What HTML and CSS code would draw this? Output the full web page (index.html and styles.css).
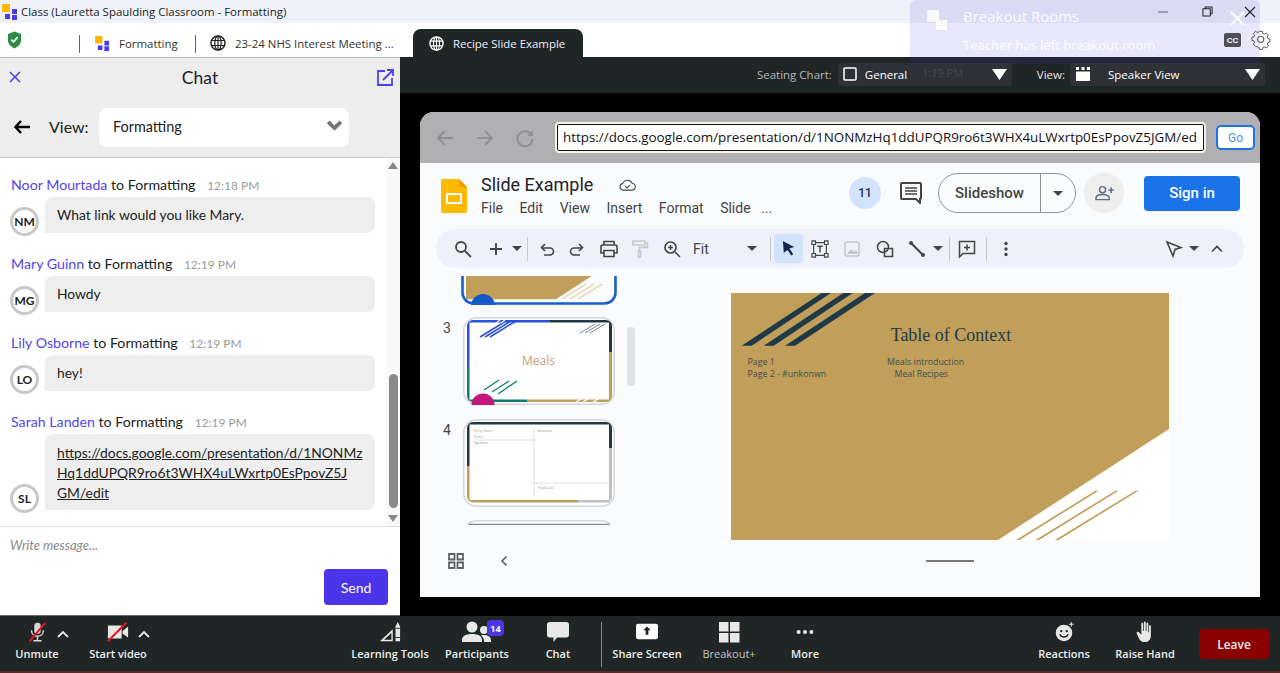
FILE: index.html
```html
<!DOCTYPE html>
<html lang="en">
<head>
<meta charset="utf-8">
<title>Class - Formatting</title>
<link rel="stylesheet" href="styles.css">
</head>
<body>
<svg class="defs" width="0" height="0" aria-hidden="true">
  <symbol id="globe" viewBox="0 0 16 16"><circle cx="8" cy="8" r="7" fill="none" stroke="currentColor" stroke-width="1.5"/><ellipse cx="8" cy="8" rx="3.2" ry="7" fill="none" stroke="currentColor" stroke-width="1.2"/><path d="M1 5.5h14M1 10.5h14M8 1v14" fill="none" stroke="currentColor" stroke-width="1.2"/></symbol>
  <symbol id="caret" viewBox="0 0 10 5"><path d="M0 0h10L5 5z" fill="currentColor"/></symbol>
  <symbol id="logo" viewBox="0 0 16 16"><path d="M0 0h8v8H0z" fill="#ffb800"/><path d="M10 5h5v5h-5zM3 10h5v5H3zM10 11h5v5h-5z" fill="#4a3ae8"/></symbol>
</svg>
<div class="app">
  <div class="titlebar"><svg class="title-logo"><use href="#logo"/></svg><span>Class (Lauretta Spaulding Classroom - Formatting)</span></div>
  <div class="tabbar">
    <svg class="shield" viewBox="0 0 16 18"><path d="M8 0l7 2.500V9c0 4-3 7-7 9-4-2-7-5-7-9V2.500z" fill="#2e8b45"/><path d="M4.500 8.500l2.500 2.500 4.500-5" fill="none" stroke="#fff" stroke-width="1.800"/></svg>
    <i class="tab-sep tab-sep-a"></i>
    <div class="tab tab-one"><svg class="tab-icon"><use href="#logo"/></svg><span>Formatting</span></div>
    <i class="tab-sep"></i>
    <div class="tab tab-two"><svg class="tab-globe"><use href="#globe"/></svg><span>23-24 NHS Interest Meeting ...</span></div>
    <div class="tab tab-active"><svg class="tab-globe"><use href="#globe"/></svg><span>Recipe Slide Example</span></div>
  </div>
  <div class="main">
    <aside class="chat">
      <header class="chat-head">
        <svg class="chat-close" viewBox="0 0 12 12"><path d="M1 1l10 10M11 1L1 11" stroke="currentColor" stroke-width="1.600" fill="none"/></svg>
        <h1>Chat</h1>
        <svg class="chat-pop" viewBox="0 0 17 17"><path d="M8 2H1v14h14V9" fill="none" stroke="currentColor" stroke-width="1.800"/><path d="M6 11L15.500 1.500M10 1h6v6" fill="none" stroke="currentColor" stroke-width="1.800"/></svg>
      </header>
      <div class="chat-view">
        <svg class="back" viewBox="0 0 16 14"><path d="M7 1L1.500 7 7 13M2 7h14" fill="none" stroke="#000" stroke-width="2.400"/></svg>
        <span class="view-label">View:</span>
        <div class="view-select"><span>Formatting</span><svg viewBox="0 0 16 10"><path d="M2 1.500l6 6 6-6" fill="none" stroke="#777" stroke-width="3.600"/></svg></div>
      </div>
      <div class="chat-scroll">
        <div class="messages">
          <article class="msg">
            <div class="msg-head"><b>Noor Mourtada</b> to Formatting <time>12:18 PM</time></div>
            <div class="msg-body"><span class="avatar">NM</span><p class="bubble">What link would you like Mary.</p></div>
          </article>
          <article class="msg">
            <div class="msg-head"><b>Mary Guinn</b> to Formatting <time>12:19 PM</time></div>
            <div class="msg-body"><span class="avatar">MG</span><p class="bubble">Howdy</p></div>
          </article>
          <article class="msg">
            <div class="msg-head"><b>Lily Osborne</b> to Formatting <time>12:19 PM</time></div>
            <div class="msg-body"><span class="avatar">LO</span><p class="bubble">hey!</p></div>
          </article>
          <article class="msg">
            <div class="msg-head"><b>Sarah Landen</b> to Formatting <time>12:19 PM</time></div>
            <div class="msg-body"><span class="avatar">SL</span><p class="bubble bubble-link"><u>https://docs.google.com/presentation/d/1NONMz<br>Hq1ddUPQR9ro6t3WHX4uLWxrtp0EsPpovZ5J<br>GM/edit</u></p></div>
          </article>
        </div>
        <div class="scrollbar">
          <svg class="sb-arrow" viewBox="0 0 10 7"><path d="M5 0l5 7H0z" fill="#888"/></svg>
          <div class="sb-track"><div class="sb-thumb"></div></div>
          <svg class="sb-arrow" viewBox="0 0 10 7"><path d="M0 0h10L5 7z" fill="#888"/></svg>
        </div>
      </div>
      <div class="composer">
        <div class="placeholder">Write message...</div>
        <button class="send">Send</button>
      </div>
    </aside>
    <section class="stage">
      <div class="stage-bar">
        <span class="bar-label">Seating Chart:</span>
        <div class="bar-select bar-seat">
          <svg class="sel-icon" viewBox="0 0 14 14"><rect x="1" y="1" width="12" height="12" rx="1" fill="none" stroke="#fff" stroke-width="1.500"/></svg>
          <span>General</span>
          <svg class="sel-tri" viewBox="0 0 15 11"><path d="M0 0h15L7.500 11z" fill="#fff"/></svg>
        </div>
        <span class="bar-label bar-label-view">View:</span>
        <div class="bar-select bar-speaker">
          <svg class="sel-icon sel-icon-view" viewBox="0 0 14 14"><path d="M0 0h3v3H0zM5.500 0h3v3h-3zM11 0h3v3h-3zM0 4.500h14V14H0z" fill="#fff"/></svg>
          <span>Speaker View</span>
          <svg class="sel-tri" viewBox="0 0 15 11"><path d="M0 0h15L7.500 11z" fill="#fff"/></svg>
        </div>
      </div>
      <div class="viewer">
        <div class="browser">
          <div class="nav">
            <svg class="nav-ic" viewBox="0 0 20 20"><path d="M18 10H3M10 3l-7 7 7 7" fill="none" stroke="#909094" stroke-width="2"/></svg>
            <svg class="nav-ic" viewBox="0 0 20 20"><path d="M2 10h15M10 3l7 7-7 7" fill="none" stroke="#909094" stroke-width="2"/></svg>
            <svg class="nav-ic" viewBox="0 0 20 20"><path d="M16.500 7A7.500 7.500 0 1 0 17.500 11" fill="none" stroke="#909094" stroke-width="2"/><path d="M18 2v6h-6z" fill="#909094"/></svg>
            <div class="url">https://docs.google.com/presentation/d/1NONMzHq1ddUPQR9ro6t3WHX4uLWxrtp0EsPpovZ5JGM/ed</div>
            <button class="go">Go</button>
          </div>
          <div class="doc">
            <div class="doc-head">
              <svg class="doc-logo" viewBox="0 0 26 34"><path d="M2 0h16l8 8v24a2 2 0 0 1-2 2H2a2 2 0 0 1-2-2V2a2 2 0 0 1 2-2z" fill="#ffba00"/><path d="M18 0l8 8h-8z" fill="#f29900"/><rect x="6" y="15" width="14" height="9" fill="none" stroke="#fff" stroke-width="2"/></svg>
              <div class="doc-titles">
                <div class="doc-title"><span>Slide Example</span><svg viewBox="0 0 20 14"><path d="M5 13a4 4 0 0 1-.6-7.900A6 6 0 0 1 15.500 5 4 4 0 0 1 15 13z" fill="none" stroke="#444" stroke-width="1.300"/><path d="M7.500 8.500l2 2 3.500-3.500" fill="none" stroke="#444" stroke-width="1.200"/></svg></div>
                <nav class="doc-menu"><span>File</span><span>Edit</span><span>View</span><span>Insert</span><span>Format</span><span>Slide</span><span class="menu-more">...</span></nav>
              </div>
              <div class="doc-actions">
                <span class="count">11</span>
                <svg class="comments" viewBox="0 0 22 22"><path d="M2 1h18a1 1 0 0 1 1 1v14a1 1 0 0 1-1 1v4l-4-4H2a1 1 0 0 1-1-1V2a1 1 0 0 1 1-1z" fill="none" stroke="#444" stroke-width="2"/><path d="M5 6h12M5 9h12M5 12h12" stroke="#444" stroke-width="1.600"/></svg>
                <div class="slideshow"><span class="ss-label">Slideshow</span><span class="ss-caret"><svg><use href="#caret"/></svg></span></div>
                <span class="share"><svg viewBox="0 0 20 16"><circle cx="8" cy="4.500" r="3.200" fill="none" stroke="#5f6b7a" stroke-width="1.500"/><path d="M1 15v-1.500c0-2.500 3-4 7-4s7 1.500 7 4V15z" fill="none" stroke="#5f6b7a" stroke-width="1.500"/><path d="M14 5h6M17 2v6" stroke="#5f6b7a" stroke-width="1.500"/></svg></span>
                <button class="signin">Sign in</button>
              </div>
            </div>
            <div class="toolbar">
              <svg class="ti" viewBox="0 0 18 18"><circle cx="7" cy="7" r="5" fill="none" stroke="#444" stroke-width="1.800"/><path d="M11 11l6 6" stroke="#444" stroke-width="1.800"/></svg>
              <svg class="ti" viewBox="0 0 18 18"><path d="M9 3v12M3 9h12" stroke="#444" stroke-width="1.900"/></svg>
              <svg class="tc"><use href="#caret"/></svg>
              <i class="ts"></i>
              <svg class="ti" viewBox="0 0 18 18"><path d="M4 8h8a3.500 3.500 0 0 1 0 7H6M7 4L3.500 7.500 7 11" fill="none" stroke="#444" stroke-width="1.600"/></svg>
              <svg class="ti" viewBox="0 0 18 18"><path d="M14 8H6a3.500 3.500 0 0 0 0 7h6M11 4l3.500 3.500L11 11" fill="none" stroke="#444" stroke-width="1.600"/></svg>
              <svg class="ti" viewBox="0 0 18 18"><path d="M4 5V1.500h10V5M4 13H1V6.500A1.500 1.500 0 0 1 2.500 5h13A1.500 1.500 0 0 1 17 6.500V13h-3M4 10.500h10v6H4z" fill="none" stroke="#444" stroke-width="1.600"/></svg>
              <svg class="ti" viewBox="0 0 18 18"><path d="M2 1h12v4H2zM14 3h2.500v4.500H8.500V11M7.500 11h2v6h-2z" fill="none" stroke="#c4c7c9" stroke-width="1.500"/></svg>
              <svg class="ti" viewBox="0 0 18 18"><circle cx="7.500" cy="7.500" r="5.500" fill="none" stroke="#444" stroke-width="1.700"/><path d="M12 12l5 5M7.500 5v5M5 7.500h5" stroke="#444" stroke-width="1.500"/></svg>
              <span class="fit">Fit</span>
              <svg class="tc"><use href="#caret"/></svg>
              <i class="ts"></i>
              <span class="cursor"><svg viewBox="0 0 16 18"><path d="M2 1l12 6.500-5 1.500 4 6-2 1.500-4-6-4 3z" fill="#12264a"/></svg></span>
              <svg class="ti" viewBox="0 0 20 20"><path d="M3 3h14v14H3z" fill="none" stroke="#444" stroke-width="1.300"/><path d="M1 1h4v4H1zM15 1h4v4h-4zM1 15h4v4H1zM15 15h4v4h-4z" fill="#edf2fa" stroke="#444" stroke-width="1.300"/><path d="M7 7h6M10 7v7" stroke="#444" stroke-width="1.600"/></svg>
              <svg class="ti" viewBox="0 0 18 18"><rect x="2" y="2" width="14" height="14" rx="2" fill="none" stroke="#c4c7c9" stroke-width="1.500"/><path d="M4 14l4-5 3 3 2-2 2 4z" fill="#c4c7c9"/></svg>
              <svg class="ti" viewBox="0 0 18 18"><circle cx="7" cy="7" r="5.500" fill="none" stroke="#444" stroke-width="1.500"/><path d="M8.500 8.500h8v8h-8z" fill="none" stroke="#444" stroke-width="1.500"/></svg>
              <svg class="ti" viewBox="0 0 18 18"><path d="M3 3l12 12" stroke="#444" stroke-width="2"/><circle cx="3" cy="3" r="2" fill="#444"/><circle cx="15" cy="15" r="2" fill="#444"/></svg>
              <svg class="tc"><use href="#caret"/></svg>
              <i class="ts"></i>
              <svg class="ti" viewBox="0 0 18 18"><path d="M1.500 1.500h15v12H5L1.500 17z" fill="none" stroke="#444" stroke-width="1.500"/><path d="M9 4.500v6M6 7.500h6" stroke="#444" stroke-width="1.500"/></svg>
              <i class="ts"></i>
              <svg class="ti" viewBox="0 0 18 18"><circle cx="9" cy="3.500" r="1.700" fill="#444"/><circle cx="9" cy="9" r="1.700" fill="#444"/><circle cx="9" cy="14.500" r="1.700" fill="#444"/></svg>
              <svg class="ti" viewBox="0 0 18 18"><path d="M2 2l14 5.500-6 2-2 6.500z" fill="none" stroke="#444" stroke-width="1.600"/></svg>
              <svg class="tc"><use href="#caret"/></svg>
              <svg class="ti" viewBox="0 0 18 18"><path d="M4 11.500l5-5 5 5" fill="none" stroke="#444" stroke-width="1.700"/></svg>
            </div>
            <div class="workspace">
              <div class="film">
                <div class="film-list">
                  <div class="film-row film-row-first">
                    <svg class="thumb-cut" viewBox="0 0 156 29"><path d="M5 0h125.700L95 23.300H5z" fill="#c19f5b"/><path d="M125 8L101 23M133 8l-24 15M141 8l-24 15" stroke="#e4cf9f" stroke-width="1.200"/><circle cx="22" cy="30" r="12" fill="#1259c3"/><path d="M1.500 0v16a11 11 0 0 0 11 11.500h131a11 11 0 0 0 11-11.500V0" fill="none" stroke="#1a5fd0" stroke-width="2.600"/></svg>
                  </div>
                  <div class="film-row">
                    <span class="film-num">3</span>
                    <svg class="thumb" viewBox="0 0 152 88">
                      <rect x=".75" y=".75" width="150.500" height="86.500" rx="13" fill="#fff" stroke="#d4d6d8" stroke-width="1.500"/>
                      <path d="M4 9a6 6 0 0 1 6-6h77v2.500H6.500V50H4z" fill="#2b50dc"/>
                      <path d="M87 3h56a6 6 0 0 1 6 6v26h-3V5.500H87z" fill="#1f3a42"/>
                      <path d="M146 35h3v44a6 6 0 0 1-6 6H64v-2.500h82z" fill="#c19f5b"/>
                      <path d="M4 50h2.500v32.500H64V85H10a6 6 0 0 1-6-6z" fill="#0f7b6c"/>
                      <path d="M17 20L43 4M22 20L48 4M27 20L53 4" stroke="#2b50dc" stroke-width="1.500" fill="none"/>
                      <path d="M33 6l4-3M38 6l4-3" stroke="#fff" stroke-width="1.200"/>
                      <path d="M117 16l15-9M122 16l15-9M127 16l15-9" stroke="#74838a" stroke-width="1"/>
                      <path d="M21 73l15-10M29 75l17-11M35 77l19-13" stroke="#0f7b6c" stroke-width="1.300"/>
                      <path d="M113 85l5-3M120 85l5-3M130 85l5-3" stroke="#fff" stroke-width="1.300"/>
                      <circle cx="20" cy="88" r="11.500" fill="#c2187d"/>
                      <text x="75.500" y="48" class="thumb-meals" text-anchor="middle">Meals</text>
                    </svg>
                  </div>
                  <div class="film-row film-row-gap">
                    <span class="film-num">4</span>
                    <svg class="thumb" viewBox="0 0 152 88">
                      <rect x=".75" y=".75" width="150.500" height="86.500" rx="13" fill="#fff" stroke="#d4d6d8" stroke-width="1.500"/>
                      <path d="M4 9a6 6 0 0 1 6-6h133a6 6 0 0 1 6 6v20h-3V5.500H6.500V47H4z" fill="#1f3a42"/>
                      <path d="M4 47h2.500v34H115v2.500H10a6 6 0 0 1-6-6z" fill="#c19f5b"/>
                      <path d="M146 29h3v50l-3 4.500H115V81h31z" fill="#bfc1c2"/>
                      <path d="M71 9v68M10 21h64M67 64h80" stroke="#d8d9da" stroke-width=".8"/>
                      <text x="11" y="13" class="thumb-t thumb-t-o">Recipe Name:</text>
                      <text x="11" y="18.500" class="thumb-t thumb-t-o">Name:</text>
                      <text x="11" y="25" class="thumb-t">Ingredients:</text>
                      <text x="74" y="12.500" class="thumb-t">Instructions:</text>
                      <text x="75" y="70" class="thumb-t">Prep &amp; Cook:</text>
                    </svg>
                  </div>
                  <div class="film-row">
                    <svg class="thumb thumb-next" viewBox="0 0 152 88"><rect x=".75" y=".75" width="150.500" height="86.500" rx="13" fill="#fff" stroke="#d4d6d8" stroke-width="1.500"/><path d="M6 4.500h140" stroke="#7d8c92" stroke-width="1.500"/></svg>
                  </div>
                  <div class="film-scroll"></div>
                </div>
                <div class="film-foot">
                  <svg class="film-grid" viewBox="0 0 16 16"><path d="M1 1h5.500v5.500H1zM9.500 1H15v5.500H9.500zM1 9.500h5.500V15H1zM9.500 9.500H15V15H9.500z" fill="none" stroke="#5f6368" stroke-width="1.800"/></svg>
                  <svg class="film-back" viewBox="0 0 8 12"><path d="M6.500 1.500L2 6l4.500 4.500" fill="none" stroke="#5f6368" stroke-width="1.700"/></svg>
                </div>
              </div>
              <div class="canvas">
                <svg class="slide" viewBox="0 0 438 247">
                  <rect width="438" height="247" fill="#c19f5b"/>
                  <path d="M90.700 0H100L20.700 52.700H10.700zM112.300 0h9.400L42.700 52.700h-10zM134 0h10L64 52.700H54z" fill="#1f3a47"/>
                  <path d="M438 136L267 247h171z" fill="#fff"/>
                  <path d="M364.500 197.700h3L288.500 247h-3.500zM384.500 197.700h3L308 247h-3.500zM404.500 197.700h3L327.500 247H324z" fill="#c19f5b"/>
                  <text x="220" y="48" text-anchor="middle" class="s-title">Table of Context</text>
                  <text x="16.500" y="72" class="s-text">Page 1</text>
                  <text x="16.500" y="84" class="s-text">Page 2 - #unkonwn</text>
                  <text x="156" y="72" class="s-text">Meals introduction</text>
                  <text x="163.500" y="84" class="s-text">Meal Recipes</text>
                </svg>
                <div class="handle"></div>
              </div>
            </div>
          </div>
        </div>
      </div>
      <div class="toast">
        <svg class="toast-icon" viewBox="0 0 20 20"><path d="M0 0h12v12H0z" fill="#fff" opacity=".8"/><path d="M9 10h5v5H9zM15 10h5v5h-5zM9 15.500h11V20H9z" fill="#fff" opacity=".95"/></svg>
        <div class="toast-body">
          <div class="toast-title">Breakout Rooms</div>
          <div class="toast-msg">Teacher has left breakout room</div>
          <div class="toast-time">1:19 PM</div>
        </div>
        <svg class="toast-x" viewBox="0 0 16 16"><path d="M1 1l14 14M15 1L1 15" stroke="#fff" stroke-width="2.200"/></svg>
      </div>
      <div class="winctl">
        <div class="win-row">
          <svg class="win-min" viewBox="0 0 12 2"><path d="M1 1h10" stroke="#777" stroke-width="1.200"/></svg>
          <svg class="win-max" viewBox="0 0 12 12"><path d="M3.500 3V1h7.500v7.500H9M1 3h8v8H1z" fill="none" stroke="#222" stroke-width="1.100"/></svg>
          <svg class="win-close" viewBox="0 0 12 12"><path d="M1 1l10 10M11 1L1 11" stroke="#222" stroke-width="1.100"/></svg>
        </div>
        <div class="win-row win-row-b">
          <span class="cc">CC</span>
          <svg class="gear" viewBox="0 0 20 20"><path d="M8.300 1h3.400l.5 2.500 1.700.7 2.100-1.400 2.400 2.400-1.400 2.100.7 1.700 2.300.5v3.400l-2.300.5-.7 1.700 1.400 2.100-2.400 2.400-2.100-1.400-1.700.7-.5 2.100H8.300l-.5-2.100-1.700-.7L4 17.700l-2.400-2.400L3 13.200l-.7-1.700L0 11V7.600l2.300-.5.700-1.700L1.600 3.300 4 .9l2.100 1.400 1.700-.7z" transform="scale(.9) translate(1 .5)" fill="none" stroke="#555" stroke-width="1.100"/><circle cx="9.700" cy="9.300" r="3.100" fill="none" stroke="#555" stroke-width="1.100"/></svg>
        </div>
      </div>
    </section>
  </div>
  <footer class="zoombar">
    <div class="tool">
      <svg class="tool-ic" viewBox="0 0 24 22"><rect x="9" y="1" width="7" height="12" rx="3.500" fill="#d8d8d8"/><path d="M6 9c0 9 13 9 13 0M12.500 15v5M8 20.500h9" fill="none" stroke="#d8d8d8" stroke-width="1.600"/><path d="M4 21L21 1" stroke="#e81224" stroke-width="2.200"/></svg>
      <svg class="tool-up tool-up-a" viewBox="0 0 12 8"><path d="M1 7l5-5 5 5" fill="none" stroke="#e8e8e8" stroke-width="1.800"/></svg>
      <span>Unmute</span>
    </div>
    <div class="tool">
      <svg class="tool-ic" viewBox="0 0 24 22"><path d="M1 4h15v14H1zM17 10l6-5v12l-6-4z" fill="#e8e8e8"/><path d="M1 21L21 1" stroke="#e81224" stroke-width="2.200"/></svg>
      <svg class="tool-up tool-up-b" viewBox="0 0 12 8"><path d="M1 7l5-5 5 5" fill="none" stroke="#e8e8e8" stroke-width="1.800"/></svg>
      <span>Start video</span>
    </div>
    <i></i>
    <div class="tool">
      <svg class="tool-ic" viewBox="0 0 24 24"><path d="M1 22L15 9v13z M5.500 20.500h8v-7.500z" fill="#e8e8e8" fill-rule="evenodd"/><path d="M18 6l2.500-5L23 6v16h-5z" fill="#e8e8e8"/><path d="M18 8h5M18 18h5" stroke="#202526" stroke-width="1"/></svg>
      <span>Learning Tools</span>
    </div>
    <div class="tool">
      <svg class="tool-ic tool-ic-wide" viewBox="0 0 30 22"><circle cx="10" cy="6" r="5.500" fill="#e8e8e8"/><circle cx="22" cy="9" r="4" fill="#e8e8e8"/><path d="M0 21v-2c0-4 4-6 10-6s10 2 10 6v2zM22 21h7v-2c0-3-3-5-7-5-1.500 0-2.500 0-3 .5 2 1.500 3 3 3 6.500z" fill="#e8e8e8"/></svg>
      <b class="badge">14</b>
      <span>Participants</span>
    </div>
    <div class="tool">
      <svg class="tool-ic" viewBox="0 0 24 22"><path d="M3 0h18a3 3 0 0 1 3 3v11a3 3 0 0 1-3 3H11l-4 5v-5H3a3 3 0 0 1-3-3V3a3 3 0 0 1 3-3z" fill="#e8e8e8"/></svg>
      <span>Chat</span>
    </div>
    <i class="zoom-sep"></i>
    <div class="tool">
      <svg class="tool-ic" viewBox="0 0 24 22"><rect y="2" width="24" height="17" rx="2.500" fill="#fff"/><path d="M12 5l4 4h-2.500v5h-3V9H8z" fill="#202526"/></svg>
      <span>Share Screen</span>
    </div>
    <div class="tool tool-dim">
      <svg class="tool-ic" viewBox="0 0 22 22"><path d="M1 1h9.500v9.500H1zM12 1h9.500v9.500H12zM1 12h9.500v9.500H1zM12 12h9.500v9.500H12z" fill="#e8e8e8"/></svg>
      <span>Breakout+</span>
    </div>
    <div class="tool">
      <svg class="tool-ic" viewBox="0 0 24 22"><circle cx="5" cy="11" r="2.200" fill="#e8e8e8"/><circle cx="12" cy="11" r="2.200" fill="#e8e8e8"/><circle cx="19" cy="11" r="2.200" fill="#e8e8e8"/></svg>
      <span>More</span>
    </div>
    <i></i>
    <div class="tool">
      <svg class="tool-ic" viewBox="0 0 24 22"><circle cx="12" cy="12" r="9" fill="#e8e8e8"/><circle cx="9" cy="10" r="1.300" fill="#202526"/><circle cx="15" cy="10" r="1.300" fill="#202526"/><path d="M7.500 13.500c1.500 4 7.500 4 9 0" fill="none" stroke="#202526" stroke-width="1.500"/><path d="M20 0v5M17.500 2.500h5" stroke="#e8e8e8" stroke-width="1.200"/></svg>
      <span>Reactions</span>
    </div>
    <div class="tool">
      <svg class="tool-ic" viewBox="0 0 24 24"><path d="M8 3a1 1 0 0 1 2 0v8h.800V1.500a1 1 0 0 1 2 0V11h.800V2.500a1 1 0 0 1 2 0V12l.8.500V5.500a1 1 0 0 1 2 0V16c0 4-2.500 7-6.500 7-3 0-5-1-6.500-4L3 13.500c-.8-1.500 1-2.500 2-1.500L8 15z" fill="#e8e8e8"/></svg>
      <span>Raise Hand</span>
    </div>
    <div class="leave-cell"><button class="leave">Leave</button></div>
  </footer>
</div>
</body>
</html>
```
FILE: styles.css
```css
* { box-sizing: border-box; }
html, body { margin: 0; height: 100%; overflow: hidden; }
body { font-family: "Open Sans", "Liberation Sans", sans-serif; background: #000; }
button { font: inherit; border: 0; padding: 0; }
h1, p { margin: 0; font-weight: 400; }
i { font-style: normal; display: block; }
.defs { position: absolute; }
.app { width: 1280px; height: 673px; display: flex; flex-direction: column; position: relative; }

/* title + tabs */
.titlebar { height: 23px; background: #eff2f9; display: flex; align-items: center; padding-left: 2px; font-size: 11.450px; color: #222; }
.title-logo { width: 16px; height: 16px; margin-right: 3px; }
.tabbar { height: 34px; background: #fff; display: flex; align-items: flex-end; position: relative; font-size: 11.450px; color: #333; }
.shield { width: 15px; height: 18px; margin: 0 0 8px 7px; }
.tab-sep { width: 1px; height: 18px; background: #666; margin-bottom: 4px; }
.tab-sep-a { margin-left: 57px; }
.tab { height: 28px; display: flex; align-items: center; }
.tab-one { width: 115px; padding-left: 15px; }
.tab-icon { width: 15px; height: 15px; margin-right: 9px; }
.tab-two { width: 217px; padding-left: 14px; }
.tab-globe { width: 16px; height: 16px; margin-right: 9px; color: #222; flex: none; }
.tab-active { width: 170px; padding-left: 16px; background: #202526; color: #eef; border-radius: 8px 8px 0 0; }
.tab-active .tab-globe { color: #fff; margin-right: 9px; width: 15px; height: 15px; }

.main { flex: 1; min-height: 0; display: flex; position: relative; }

/* chat */
.chat { width: 400px; background: #fff; display: flex; flex-direction: column; border-bottom: 1px solid #666; font-family: Lato, "Open Sans", sans-serif; color: #222; }
.chat-head { height: 43px; background: #ededed; display: grid; grid-template-columns: 30px 1fr 30px; align-items: center; justify-items: center; color: #4f40ea; border-top: 1px solid #bbb; padding-bottom: 4px; }
.chat-head h1 { font-size: 17.500px; color: #222; }
.chat-close { width: 12px; height: 12px; }
.chat-pop { width: 17px; height: 17px; }
.chat-view { height: 58px; background: #ededed; border-bottom: 1px solid #ccc; display: flex; align-items: center; padding: 0 0 3px 14px; }
.back { width: 16px; height: 14px; }
.view-label { font-size: 16px; margin-left: 19px; width: 50px; padding-bottom: 1px; }
.view-select { width: 250px; height: 39px; background: #fff; border-radius: 8px; display: flex; align-items: center; justify-content: space-between; padding: 0 6px 1px 14px; font-size: 14.400px; }
.view-select svg { width: 17px; height: 11px; margin-bottom: 3px; }

.chat-scroll { height: 368px; display: flex; overflow: hidden; }
.messages { width: 386px; padding: 15px 11px 0 10px; display: flex; flex-direction: column; gap: 19px; }
.msg-head { height: 24px; font-size: 14.200px; line-height: 23px; padding-left: 1px; white-space: nowrap; }
.msg-head b { font-weight: 400; color: #5346ee; }
.msg-head time { color: #9a9a9a; font-size: 12px; margin-left: 8px; }
.msg-body { display: flex; align-items: flex-end; gap: 6px; }
.avatar { flex: none; width: 29px; height: 29px; margin-bottom: -3px; border: 3px solid #c8c8c8; border-radius: 50%; background: #fff; display: flex; align-items: center; justify-content: center; font-size: 12px; font-weight: 700; color: #222; }
.bubble { flex: 1; background: #eee; border-radius: 8px 8px 8px 0; font-size: 13.850px; line-height: 20px; padding: 8px 10px 8px 12px; min-height: 36px; }
.bubble-link { padding: 9px 10px 7px 12px; white-space: nowrap; }
.scrollbar { width: 14px; background: #f9f9f9; display: flex; flex-direction: column; align-items: center; padding-top: 4px; }
.sb-arrow { width: 10px; height: 7px; flex: none; }
.sb-track { flex: 1; width: 9px; display: flex; flex-direction: column; justify-content: flex-end; padding-bottom: 7px; }
.sb-thumb { height: 134px; background: #8a8a8a; border-radius: 5px; }
.scrollbar .sb-arrow:last-child { margin-bottom: 4px; }
.composer { flex: 1; border-top: 1px solid #ddd; padding: 10px 12px 0 10px; display: flex; flex-direction: column; background: #fff; }
.placeholder { font-style: italic; font-size: 13px; color: #888; height: 32px; line-height: 16px; }
.send { align-self: flex-end; width: 64px; height: 36px; border-radius: 4px; background: #4b35e8; color: #fff; font-size: 14px; font-family: inherit; }

/* stage */
.stage { flex: 1; background: #000; display: flex; flex-direction: column; position: relative; }
.stage-bar { height: 36px; background: #202526; display: flex; align-items: center; justify-content: flex-end; padding: 0 15px 2px 0; font-size: 11.500px; color: #fff; }
.bar-label { color: #b4b6b8; margin-right: 6px; }
.bar-label-view { color: #e6e6e6; margin-left: 25px; margin-right: 5px; }
.bar-select { height: 23px; background: #2e3236; border-radius: 4px; display: flex; align-items: center; padding: 0 5px 0 5px; }
.bar-seat { width: 174px; }
.bar-speaker { width: 195px; }
.sel-icon { width: 14px; height: 14px; margin-right: 8px; }
.sel-icon-view { margin-right: 18px; margin-left: 1px; }
.bar-select span { flex: 1; }
.sel-tri { width: 15px; height: 11px; }
.viewer { flex: 1; padding: 19px 20px; }
.browser { height: 485px; border-radius: 14px 14px 0 0; overflow: hidden; display: flex; flex-direction: column; background: #f9fbfd; font-family: Roboto, "Open Sans", sans-serif; color: #333; }

.nav { height: 51px; background: #b0afb2; display: flex; align-items: center; padding: 0 5px 0 15px; flex: none; }
.nav-ic { width: 20px; height: 20px; margin-right: 20px; }
.url { width: 647px; height: 27px; margin-left: 2px; background: #fff; border: 1px solid #111; outline: 2px solid #f5f3e2; outline-offset: 0; border-radius: 2px; padding: 0 5px; line-height: 25px; font-family: "Open Sans", sans-serif; font-size: 13.400px; color: #111; overflow: hidden; white-space: nowrap; }
.go { width: 39px; height: 25px; margin-left: 12px; background: #fff; border: 2px solid #1a73e8; border-radius: 5px; color: #4a90e2; font-size: 12px; }
.doc { flex: 1; display: flex; flex-direction: column; background: #f9fbfd; min-height: 0; }
.doc-head { height: 66px; flex: none; display: flex; align-items: flex-start; padding: 16px 20px 0 21px; }
.doc-logo { width: 26px; height: 34px; flex: none; margin-right: 14px; }
.doc-titles { width: 368px; margin-top: -6px; }
.doc-title { display: flex; align-items: center; font-size: 18px; line-height: 24px; color: #222; gap: 26px; }
.doc-title svg { width: 17px; height: 12px; }
.doc-menu { display: flex; font-size: 14px; line-height: 20px; color: #444; gap: 16.500px; margin-top: 1px; }
.menu-more { margin-left: -6px; }
.doc-actions { display: flex; align-items: center; height: 40px; margin-top: -6px; flex: 1; }
.count { width: 32px; height: 32px; border-radius: 50%; background: #d3e3fd; display: flex; align-items: center; justify-content: center; font-size: 12px; font-weight: 500; color: #1f2d3d; }
.comments { width: 22px; height: 22px; margin: 0 16px 0 19px; }
.slideshow { width: 138px; height: 40px; border: 1px solid #8f9297; border-radius: 20px; display: flex; align-items: center; font-size: 15px; font-weight: 500; color: #444; }
.ss-label { width: 102px; text-align: center; border-right: 1px solid #8f9297; line-height: 38px; }
.ss-caret { flex: 1; display: flex; justify-content: center; }
.ss-caret svg { width: 10px; height: 5px; color: #444; }
.share { width: 40px; height: 40px; border-radius: 50%; background: #eee; margin-left: 8px; display: flex; align-items: center; justify-content: center; }
.share svg { width: 19px; height: 16px; }
.signin { width: 96px; height: 35px; background: #1a73e8; color: #fff; border-radius: 4px; font-family: inherit; font-size: 15px; font-weight: 500; margin-left: 20px; }

.toolbar { height: 39px; flex: none; margin: 0 16px; background: #edf2fa; border-radius: 20px; display: grid; align-items: center; justify-items: end; grid-template-columns: 36px 33px 17px 6px 27.500px 30.500px 32px 31px 31.500px 32.500px 44px 14px 32px 26px 32px 33px 32px 17px 7px 26px 11px 27.500px 168.500px 16px 26.500px; }
.ti { width: 18px; height: 18px; }
.tc { width: 10px; height: 5px; color: #444; }
.ts { width: 1px; height: 24px; background: #c7c7c7; }
.fit { width: 20px; font-size: 14px; color: #444; }
.cursor { width: 29px; height: 29px; background: #d3e3fd; border-radius: 4px; display: flex; align-items: center; justify-content: center; }
.cursor svg { width: 15px; height: 17px; }

.workspace { flex: 1; display: flex; min-height: 0; }
.film { width: 311px; flex: none; position: relative; }
.film-list { margin-top: 8px; height: 249px; overflow: hidden; display: flex; flex-direction: column; gap: 13px; position: relative; padding-left: 43px; }
.film-row { position: relative; flex: none; }
.film-row-first { height: 28px; margin-left: -2px; }
.film-row-gap { margin-top: 1px; }
.thumb-cut { width: 156px; height: 29px; display: block; }
.thumb { width: 152px; height: 88px; display: block; }
.film-num { position: absolute; left: -20px; top: 3px; font-size: 14px; color: #444; }
.film-scroll { position: absolute; left: 207px; top: 51px; width: 8px; height: 59px; background: #dfe1e5; border-radius: 4px; }
.thumb-meals { font: 12px "Open Sans", sans-serif; fill: #c89b78; }
.thumb-t { font: 2.600px "Open Sans", sans-serif; fill: #888; }
.thumb-t-o { font-size: 3px; fill: #c89b78; }
.film-foot { display: flex; align-items: center; padding: 28px 0 0 28px; }
.film-grid { width: 16px; height: 16px; }
.film-back { width: 8px; height: 12px; margin-left: 36px; }
.canvas { flex: none; padding-top: 25px; display: flex; flex-direction: column; align-items: center; width: 438px; }
.slide { width: 438px; height: 247px; display: block; background: #c19f5b; }
.s-title { font: 18px "Liberation Serif", serif; fill: #1f3a47; }
.s-text { font: 8.800px "Open Sans", sans-serif; fill: #3c4f4b; }
.handle { width: 48px; height: 2px; background: #777; margin-top: 20px; }

/* toast + window controls */
.toast { position: absolute; left: 510px; top: -57px; width: 350px; height: 64px; background: rgba(70, 60, 230, .12); border-radius: 6px 6px 0 0; color: #fff; display: flex; padding: 10px 0 0 17px; }
.toast-icon { width: 20px; height: 20px; }
.toast-body { margin-left: 16px; }
.toast-title { font-size: 15px; line-height: 15px; margin-top: -1px; }
.toast-msg { font-size: 13.100px; line-height: 16px; margin-top: 13px; }
.toast-time { font-size: 11px; line-height: 12px; margin-top: 14px; color: rgba(255, 255, 255, .12); margin-left: -41px; }
.toast-x { position: absolute; right: 15px; top: 11px; width: 15px; height: 15px; }
.winctl { position: absolute; right: 0; top: -57px; width: 130px; }
.win-row { display: flex; align-items: center; height: 23px; padding-left: 7px; }
.win-min { width: 12px; height: 2px; }
.win-max { width: 11px; height: 11px; margin-left: 33px; }
.win-close { width: 12px; height: 12px; margin-left: 31px; }
.win-row-b { height: 34px; padding-left: 74px; }
.cc { width: 17px; height: 14px; border-radius: 2px; background: #50505a; color: #fff; font: 700 8px "Liberation Sans", sans-serif; display: flex; align-items: center; justify-content: center; }
.gear { width: 20px; height: 20px; margin-left: 10px; }

/* bottom bar */
.zoombar { height: 57px; flex: none; background: #202526; border-bottom: 2px solid #5a2a2a; display: grid; grid-template-columns: 74px 88px 188px 80px 94px 68px 18px 74px 90px 62px 188px 80px 82px 94px; font-size: 11px; font-weight: 600; color: #eee; }
.tool { position: relative; display: flex; flex-direction: column; align-items: center; padding-top: 5px; white-space: nowrap; }
.tool span { margin-top: 2px; line-height: 17px; }
.tool-ic { width: 22px; height: 22px; flex: none; }
.tool-ic-wide { width: 30px; }
.tool-dim { color: #c4c4c4; font-weight: 400; }
.tool-up { position: absolute; top: 14px; width: 12px; height: 8px; }
.tool-up-a { left: 57px; }
.tool-up-b { left: 64px; }
.badge { position: absolute; left: 57px; top: 4px; width: 17px; height: 16px; border-radius: 4px; background: #4b35e8; color: #fff; font-size: 9px; font-weight: 700; display: flex; align-items: center; justify-content: center; }
.zoom-sep { width: 1px; height: 45px; background: #888; margin: 6px 0 0 9px; }
.leave-cell { display: flex; justify-content: center; padding: 13px 0 0 2px; }
.leave { width: 70px; height: 30px; background: #8b0000; color: #eee; border-radius: 4px; font-family: inherit; font-size: 12px; font-weight: 600; }
```
